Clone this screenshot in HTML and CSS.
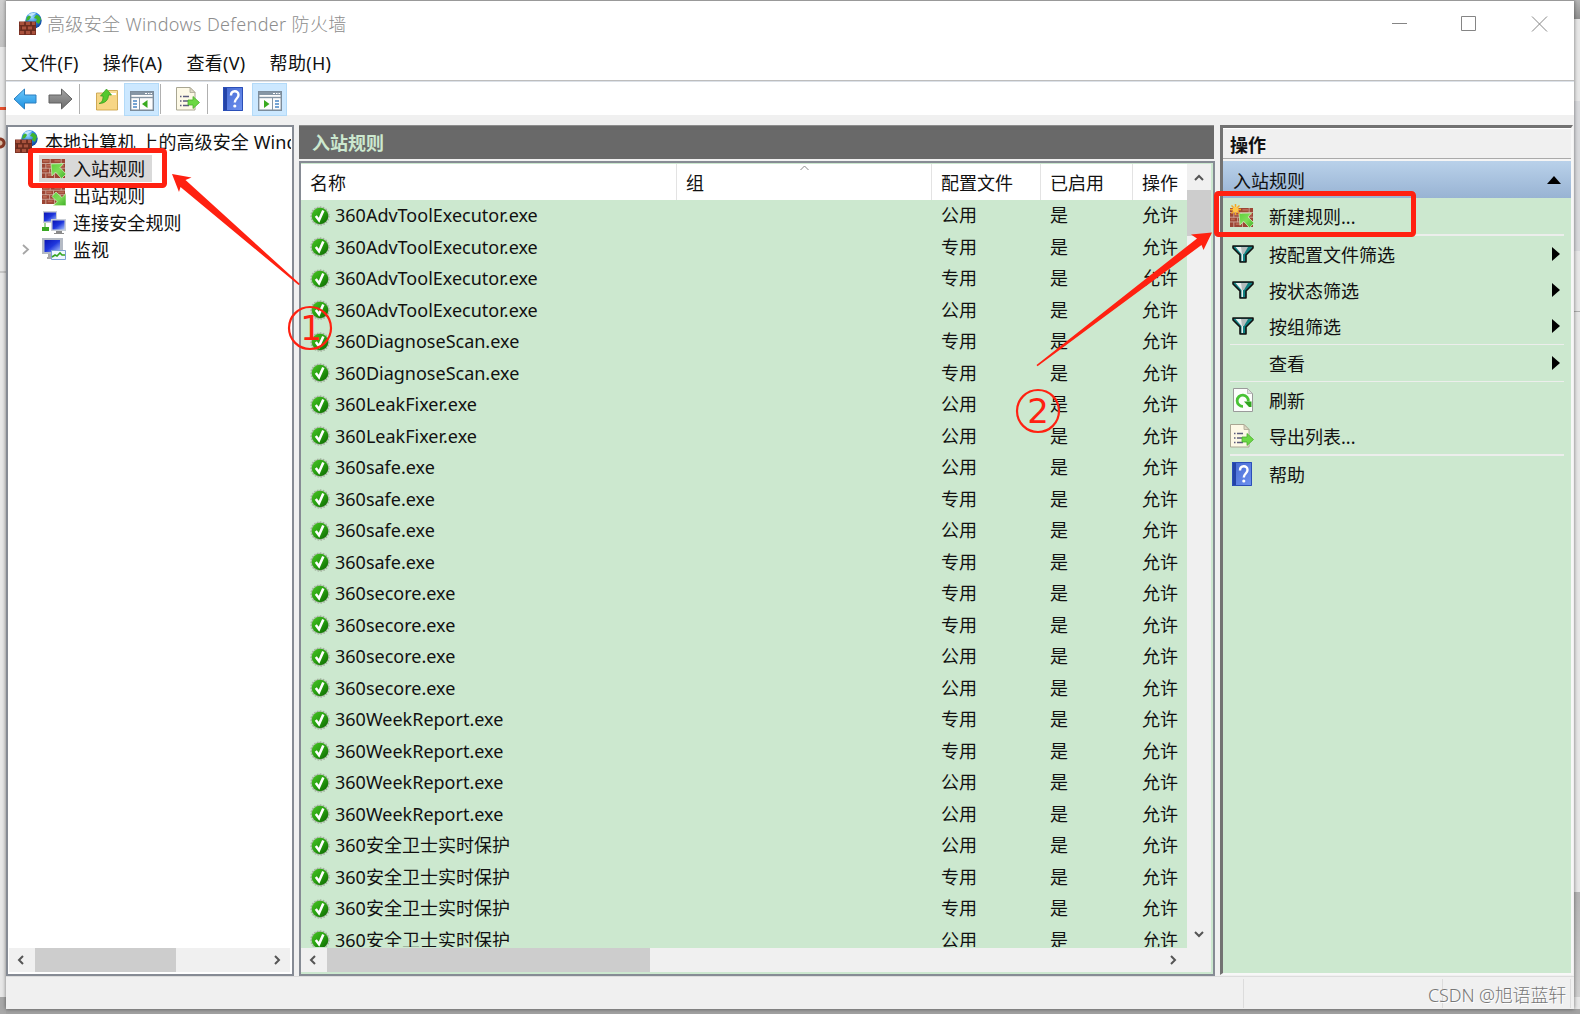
FILE: index.html
```html
<!DOCTYPE html>
<html lang="zh-CN">
<head>
    <meta charset="UTF-8">
    <meta name="viewport" content="width=device-width, initial-scale=1.0">
    <title>高级安全 Windows Defender 防火墙</title>
    <link rel="stylesheet" href="styles.css">
</head>
<body>

    <!-- shared icons -->
    <svg class="defs" width="0" height="0">
        <defs>
            <linearGradient id="gBlue" x1="0" y1="0" x2="0" y2="1"><stop offset="0" stop-color="#6cc8fb"/><stop offset="1" stop-color="#1b8fe0"/></linearGradient>
            <linearGradient id="gGray" x1="0" y1="0" x2="0" y2="1"><stop offset="0" stop-color="#a5a5a5"/><stop offset="1" stop-color="#6b6b6b"/></linearGradient>
            <linearGradient id="gGreen" x1="0" y1="0" x2="1" y2="1"><stop offset="0" stop-color="#5fd03c"/><stop offset=".5" stop-color="#7fdc58"/><stop offset="1" stop-color="#3fae28"/></linearGradient>
            <linearGradient id="gFolder" x1="0" y1="0" x2="0" y2="1"><stop offset="0" stop-color="#fbe29a"/><stop offset="1" stop-color="#e2b654"/></linearGradient>
            <linearGradient id="gScreen" x1="0" y1="0" x2="1" y2="1"><stop offset="0" stop-color="#0a14b4"/><stop offset=".5" stop-color="#1f36dc"/><stop offset="1" stop-color="#a9c4fb"/></linearGradient>
            <linearGradient id="gHelp" x1="0" y1="0" x2="1" y2="1"><stop offset="0" stop-color="#4468d0"/><stop offset="1" stop-color="#6f92f0"/></linearGradient>
            <linearGradient id="gCheck" x1="0" y1="0" x2="1" y2="1"><stop offset="0" stop-color="#4ac326"/><stop offset=".5" stop-color="#27a010"/><stop offset="1" stop-color="#0b6200"/></linearGradient>
            <radialGradient id="gGlobe" cx=".4" cy=".3" r=".75"><stop offset="0" stop-color="#9fdcff"/><stop offset=".5" stop-color="#2b86dd"/><stop offset="1" stop-color="#0d3c94"/></radialGradient>
        </defs>

        <symbol id="bricks" viewBox="0 0 24 20" preserveAspectRatio="none">
            <path fill="#9c4534" d="M0 0h24v20H0z"/>
            <path fill="#bb6a54" d="M1 1h6v2H1zM13 1h6v2h-6zM5 6h5v2H5zM17 6h6v2h-6zM1 11h4v2H1zM12 11h6v2h-6zM6 16h5v2H6z"/>
            <path stroke="#d3b3a6" stroke-width=".9" fill="none" d="M0 4.700h24M0 9.700h24M0 14.700h24M8.500 0v5M20 0v5M4 5v5M12 5v5M8 10v5M19 10v5M4 15v5M13 15v5"/>
        </symbol>
        <symbol id="firewall" viewBox="0 0 23 23">
            <circle cx="14.500" cy="8.500" r="8.200" fill="url(#gGlobe)"/>
            <path fill="#3fb52c" d="M17 3c3 0 4 2 5 4l-2 5-3-2 1-3-3-1zM8 5l3-2 1 2-2 3-3 1z"/>
            <path fill="#d8f1ff" opacity=".8" d="M9 3c2-2 6-2.500 8-1.500l-5 3z"/>
            <path fill="#7e3325" d="M0 9.500h17V23H0z"/>
            <path fill="#a9523d" d="M1 10h4v3H1zM7 10h4v3H7zM13 10h3v3h-3zM3 14.500h4v3H3zM9 14.500h4v3H9zM1 19h4v3H1zM7 19h4v3H7zM13 19h3v3h-3z"/>
            <path stroke="#5f281d" stroke-width=".8" fill="none" d="M0 13.700h17M0 18.200h17M6 9.500v4M12 9.500v4M2.500 14v4M8 14v4M14 14v4M6 18v5M12 18v5"/>
        </symbol>
        <symbol id="inbound" viewBox="0 0 24 20">
            <use href="#bricks" width="23" height="19"/>
            <path fill="url(#gGreen)" stroke="#c9efb6" stroke-width=".8" d="M9 5l12.500-.5-3.500 4 6 6.500-4.500 4.500-6-6.500-3.500 4z"/>
        </symbol>
        <symbol id="outbound" viewBox="0 0 24 20">
            <use href="#bricks" width="23" height="18"/>
            <path fill="url(#gGreen)" stroke="#c9efb6" stroke-width=".8" d="M24 19.500H11.500l3.500-4-5-5 4-4.500 6 5.500 4-4z"/>
        </symbol>
        <symbol id="newrule" viewBox="0 0 24 24">
            <use href="#bricks" x="0" y="4" width="23" height="19"/>
            <path fill="url(#gGreen)" stroke="#c9efb6" stroke-width=".8" d="M9 9.500l12.500-.5-3.500 4 6 6-4.500 4.700-6-6.500-3.500 4z"/>
            <path stroke="#f5a623" stroke-width="1.500" d="M5.500 0v11M0 5.500h11M1.500 1.500l8 8M9.500 1.500l-8 8"/>
            <circle cx="5.500" cy="5.500" r="2.800" fill="#ffc94d"/>
        </symbol>
        <symbol id="connsec" viewBox="0 0 24 24">
            <path fill="#c9ced6" d="M1 0h14v12H1z"/><path fill="url(#gScreen)" d="M2 1.500h12v9H2z"/>
            <path fill="#3aa824" d="M0 16h7v4H0z"/><path stroke="#3aa824" d="M3 12v5"/>
            <path fill="#c9ced6" d="M9 8h15v12H9z"/><path fill="url(#gScreen)" d="M10.500 9.500h12v9h-12z"/>
            <path fill="#8b8b8b" d="M14 20h6v2h2v1H12v-1h2z"/>
        </symbol>
        <symbol id="monitor" viewBox="0 0 24 24">
            <path fill="#b4bac4" d="M0 0h21v16H0z"/><path fill="url(#gScreen)" d="M2.500 2h15.500v12H2.500z"/>
            <path fill="#a9a9a9" d="M6 16h6v3h2v2H5v-2h1z"/>
            <path fill="#eef6ff" stroke="#7da2d4" d="M9.500 12.500h14v9h-14z"/>
            <path fill="none" stroke="#35a51f" stroke-width="1.600" d="M10 19l3-2 2 1 3-3 2 2 3 0"/>
        </symbol>
        <symbol id="export" viewBox="0 0 24 24">
            <path fill="#fdf9e6" stroke="#a9a692" d="M.5.500h13.500l5 5V23H.5z"/>
            <path fill="#ddd9c4" stroke="#a9a692" stroke-width=".8" d="M14 .5v5h5z"/>
            <path stroke="#5c5c7c" stroke-width="1.400" d="M4 9.500h1.500M7 9.500h6M4 14h1.500M7 14h5M4 18.500h1.500M7 18.500h6"/>
            <path fill="#6bd844" stroke="#4aae2b" stroke-width=".8" d="M12 13h5v-3.500l6.500 6-6.500 6V18h-5z"/>
        </symbol>
        <symbol id="help" viewBox="0 0 20 24">
            <path fill="url(#gHelp)" d="M0 0h20v24H0z"/>
            <path fill="#2443a8" d="M0 0h4v24H0z"/>
            <path fill="none" stroke="#2b4fb8" d="M.5.500h19v23H.5z"/>
            <path fill="none" stroke="#fff" stroke-width="2.400" d="M8 8.500c0-5.500 7.500-5.500 7.500-.5 0 3.500-3.700 3.500-3.700 7.500"/>
            <circle cx="11.800" cy="19" r="1.600" fill="#fff"/>
        </symbol>
        <symbol id="refresh" viewBox="0 0 20 24">
            <path fill="#fbfdfb" stroke="#9a9a9a" d="M.5.500h14l5 5v18H.5z"/>
            <path fill="#dedede" stroke="#a8a8a8" stroke-width=".7" d="M14.500.5v5h5z"/>
            <path fill="none" stroke="#48c234" stroke-width="2.800" d="M10 18.300a5.600 5.600 0 1 1 5.300-5"/>
            <path fill="#2fa51e" d="M11 13.500h7.500v5.500h-2.500z"/>
        </symbol>
        <symbol id="filter" viewBox="0 0 22 18">
            <path fill="#0f8080" stroke="#111" stroke-width="1.600" stroke-linejoin="round" d="M1 1h20v2l-7 7v7H8v-7L1 3z"/>
            <path fill="#e9eeee" d="M3.500 2h9l-1.500 7.500v6.500H9.500V9z"/>
            <path fill="#b4bdbd" d="M9 2h7l-4 7h-2z"/>
        </symbol>
        <symbol id="check" viewBox="0 0 20 20">
            <circle cx="10" cy="10" r="9" fill="#b5c4b1" stroke="#a3b3a0" stroke-width="1.400" stroke-dasharray="1.600 1.400"/>
            <circle cx="10" cy="10" r="8.300" fill="url(#gCheck)"/>
            <path fill="none" stroke="#fff" stroke-width="2.600" d="M5.800 10l3.200 4.200L13.300 4.500"/>
        </symbol>
        <symbol id="pane" viewBox="0 0 24 20">
            <path fill="#fdfdfd" stroke="#7c8c9b" stroke-width="1.400" d="M.7.700h22.600v18.600H.7z"/>
            <path fill="#8696a5" d="M1 1h22v3H1z"/>
            <path stroke="#fff" d="M15 2.500h2M18 2.500h1.500M20.500 2.500h1.500"/>
            <path stroke="#8696a5" stroke-width="1.400" d="M1 6.500h22"/>
        </symbol>
    </svg>

    <div class="window">
        <div class="titlebar">
            <svg class="app-icon" width="23" height="23"><use href="#firewall"/></svg>
            <span class="title">高级安全 Windows Defender 防火墙</span>
            <svg class="controls" width="156" height="16" fill="none" stroke="#858585">
                <path d="M0 7.500h15M69.500.5h14v14h-14zM140 .5l15 15M155 .5l-15 15"/>
            </svg>
        </div>

        <div class="menubar">
            <span>文件(F)</span>
            <span>操作(A)</span>
            <span>查看(V)</span>
            <span>帮助(H)</span>
        </div>

        <div class="toolbar">
            <svg class="back" width="24" height="22"><path fill="url(#gBlue)" stroke="#2a7fc0" d="M1 11L11.500 1v6H23v8H11.500v6z"/></svg>
            <svg class="forward" width="25" height="22"><path fill="url(#gGray)" stroke="#606060" d="M24 11L13.500 1v6H1v8h12.500v6z"/></svg>
            <i class="sep"></i>
            <svg class="up" width="22" height="23">
                <path fill="url(#gFolder)" stroke="#c59a3c" stroke-width=".8" d="M.5 5h10l2-2.500h9V22H.5z"/>
                <path fill="#fff" d="M12 5h8v2h-8z"/><path fill="#f7d685" d="M1 8.500h20V21.500H1z"/>
                <path fill="#55c82e" stroke="#349a1b" stroke-width=".7" d="M3 15.500c3-1 4-3 4-7.500H4.500L10.500 1l5 6h-3c0 5-3.500 8.500-9.500 8.500z"/>
            </svg>
            <span class="tool on">
                <svg width="24" height="20"><use href="#pane"/><path stroke="#4a86c5" stroke-width="1.500" d="M3 10h4M3 13h4M3 16h4"/><path stroke="#8696a5" d="M9.500 7v12"/><path fill="#38aa1f" d="M17.500 9v8L12 13z"/></svg>
            </span>
            <i class="sep after"></i>
            <svg class="export" width="24" height="24"><use href="#export"/></svg>
            <i class="sep after-export"></i>
            <svg class="help" width="20" height="24"><use href="#help"/></svg>
            <span class="tool on help-on">
                <svg width="24" height="20"><use href="#pane"/><path stroke="#4a86c5" stroke-width="1.500" d="M17 10h4M17 13h4M17 16h4"/><path stroke="#8696a5" d="M14.500 7v12"/><path fill="#38aa1f" d="M6 9v8l5.500-4z"/></svg>
            </span>
        </div>

        <div class="main">
            <div class="tree">
                <div class="tree-items">
                    <div class="node root"><svg width="23" height="23"><use href="#firewall"/></svg><span>本地计算机 上的高级安全 Wind</span></div>
                    <div class="node selected"><svg width="24" height="20"><use href="#inbound"/></svg><span>入站规则</span></div>
                    <div class="node"><svg width="24" height="20"><use href="#outbound"/></svg><span>出站规则</span></div>
                    <div class="node"><svg width="24" height="24"><use href="#connsec"/></svg><span>连接安全规则</span></div>
                    <div class="node expandable">
                        <svg class="expander" width="8" height="11"><path fill="none" stroke="#a6a6a6" stroke-width="1.800" d="M1 1l5 4.500L1 10"/></svg>
                        <svg width="24" height="24"><use href="#monitor"/></svg><span>监视</span>
                    </div>
                </div>
                <div class="hscroll">
                    <svg class="arrow" width="7" height="10"><path d="M6 1L2 5l4 4"/></svg>
                    <div class="thumb"></div>
                    <svg class="arrow end" width="7" height="10"><path d="M1 1l4 4-4 4"/></svg>
                </div>
            </div>

            <div class="center">
                <div class="center-title">入站规则</div>
                <div class="list">
                    <div class="list-body">
                        <div class="grid">
                            <div class="row head">
                                <span>名称</span><span>组<svg class="sort" width="9" height="6"><path fill="none" stroke="#8a8a8a" d="M.5 5l4-4 4 4"/></svg></span><span>配置文件</span><span>已启用</span><span>操作</span>
                            </div>
                            <div class="rows" id="rows"></div>
                        </div>
                        <div class="vscroll">
                            <svg class="arrow" width="10" height="7"><path d="M1 6l4-4 4 4"/></svg>
                            <div class="thumb"></div>
                            <svg class="arrow end" width="10" height="7"><path d="M1 1l4 4 4-4"/></svg>
                        </div>
                    </div>
                    <div class="hscroll">
                        <svg class="arrow" width="7" height="10"><path d="M6 1L2 5l4 4"/></svg>
                        <div class="thumb"></div>
                        <svg class="arrow end" width="7" height="10"><path d="M1 1l4 4-4 4"/></svg>
                    </div>
                </div>
            </div>

            <div class="actions">
                <div class="actions-title">操作</div>
                <div class="actions-group">入站规则<svg width="14" height="8"><path d="M0 8l7-8 7 8z"/></svg></div>
                <div class="action"><span class="icon"><svg width="24" height="24"><use href="#newrule"/></svg></span>新建规则...</div>
                <hr>
                <div class="action"><span class="icon"><svg width="22" height="18"><use href="#filter"/></svg></span>按配置文件筛选<svg class="more" width="8" height="14"><path d="M0 0l8 7-8 7z"/></svg></div>
                <div class="action"><span class="icon"><svg width="22" height="18"><use href="#filter"/></svg></span>按状态筛选<svg class="more" width="8" height="14"><path d="M0 0l8 7-8 7z"/></svg></div>
                <div class="action"><span class="icon"><svg width="22" height="18"><use href="#filter"/></svg></span>按组筛选<svg class="more" width="8" height="14"><path d="M0 0l8 7-8 7z"/></svg></div>
                <hr>
                <div class="action"><span class="icon"></span>查看<svg class="more" width="8" height="14"><path d="M0 0l8 7-8 7z"/></svg></div>
                <hr class="thin">
                <div class="action"><span class="icon"><svg class="page" width="20" height="24"><use href="#refresh"/></svg></span>刷新</div>
                <div class="action"><span class="icon"><svg width="24" height="24"><use href="#export"/></svg></span>导出列表...</div>
                <hr>
                <div class="action"><span class="icon"><svg width="20" height="24"><use href="#help"/></svg></span>帮助</div>
            </div>
        </div>

        <div class="statusbar">
            <span></span><span></span><span></span>
        </div>
    </div>

    <!-- red marks drawn over the window -->
    <svg class="marks" width="1580" height="1014">
        <rect x="30.500" y="150.500" width="134" height="35" rx="2"/>
        <rect x="1216.500" y="193.500" width="197" height="41" rx="2"/>
        <path d="M172 174l19.500 3.500-6 2.500L300 284l-1.500 1L180.500 187l-1.500 5z"/>
        <path d="M1212 232.500l-21 2 6 4L1036.500 365l1 1.300L1201.500 245l2 5z"/>
        <circle cx="310" cy="328" r="21"/>
        <circle cx="1038" cy="411" r="21"/>
        <text x="311" y="340">1</text>
        <text x="1038" y="423">2</text>
    </svg>

    <div class="watermark">CSDN @旭语蓝轩</div>

    <script>
        // name + profile of each inbound rule
        const rules = [
            ['360AdvToolExecutor.exe', '公用'],
            ['360AdvToolExecutor.exe', '专用'],
            ['360AdvToolExecutor.exe', '专用'],
            ['360AdvToolExecutor.exe', '公用'],
            ['360DiagnoseScan.exe', '专用'],
            ['360DiagnoseScan.exe', '专用'],
            ['360LeakFixer.exe', '公用'],
            ['360LeakFixer.exe', '公用'],
            ['360safe.exe', '公用'],
            ['360safe.exe', '专用'],
            ['360safe.exe', '公用'],
            ['360safe.exe', '专用'],
            ['360secore.exe', '专用'],
            ['360secore.exe', '专用'],
            ['360secore.exe', '公用'],
            ['360secore.exe', '公用'],
            ['360WeekReport.exe', '专用'],
            ['360WeekReport.exe', '专用'],
            ['360WeekReport.exe', '公用'],
            ['360WeekReport.exe', '公用'],
            ['360安全卫士实时保护', '公用'],
            ['360安全卫士实时保护', '专用'],
            ['360安全卫士实时保护', '专用'],
            ['360安全卫士实时保护', '公用']
        ];

        document.getElementById('rows').innerHTML = rules.map(([name, profile]) => `
            <div class="row">
                <span class="name"><svg width="20" height="20"><use href="#check"/></svg>${name}</span>
                <span></span>
                <span>${profile}</span>
                <span>是</span>
                <span>允许</span>
            </div>`).join('');
    </script>
</body>
</html>
```
FILE: styles.css
```css
* {
    box-sizing: border-box;
}

body {
    margin: 0;
    width: 1580px;
    height: 1014px;
    overflow: hidden;
    padding: 0 6px 5px;
    font-family: "Noto Sans", "Noto Sans CJK SC", sans-serif;
    font-size: 18px;
    color: #111;
    /* what is left of the desktop behind the window */
    background:
        linear-gradient(#d0d0d0, #c4c4c4) 0 0 / 6px 47px no-repeat,
        linear-gradient(#e8512f, #e8512f) 0 107px / 6px 3px no-repeat,
        radial-gradient(circle at 0 143px, #d8b9a0 2px, #8a3a26 3px, #8a3a26 5px, transparent 6px) 0 0 / 6px 160px no-repeat,
        linear-gradient(#c8c8c8, #c8c8c8) 0 271px / 6px 2px no-repeat,
        linear-gradient(#a8a8a8, #a8a8a8) 0 997px / 6px 17px no-repeat,
        linear-gradient(#b8b8b8, #909090) 1574px 0 / 6px 19px no-repeat,
        linear-gradient(#d9dadd, #d9dadd) 1574px 101px / 6px 150px no-repeat,
        linear-gradient(#b0b0b0, #b0b0b0) 1574px 311px / 6px 1px no-repeat,
        linear-gradient(#b5b5b5, #d0d0d0) 1574px 892px / 6px 105px no-repeat,
        linear-gradient(#a2a2a2, #a2a2a2) 0 1009px / 1580px 5px no-repeat,
        #e8e8e8;
}

.defs {
    position: absolute;
}

svg {
    flex: none;
}

.window {
    height: 1009px;
    display: flex;
    flex-direction: column;
    background: #f0f0f0;
    border-top: 1px solid #999;
    box-shadow: 0 0 4px rgba(0, 0, 0, 0.5);
}

.titlebar {
    height: 46px;
    display: flex;
    align-items: center;
    padding: 0 26px 1px 13px;
    background: #fff;
    color: #8d8d8d;
}

.title {
    margin-left: 5px;
    line-height: 24px;
    font-weight: 300;
    letter-spacing: 0.36px;
}

.controls {
    margin-left: auto;
}

.menubar {
    height: 34px;
    display: flex;
    gap: 24px;
    padding-left: 15px;
    line-height: 33px;
    letter-spacing: 0.3px;
    background: #fff;
    border-bottom: 1px solid #bdbdbd;
}

.toolbar {
    height: 34px;
    display: flex;
    align-items: center;
    padding: 1px 0 0 7px;
    background: #fff;
    border-top: 1px solid #dce1e8;
}

.forward {
    margin-left: 11px;
}

.sep {
    width: 1px;
    height: 30px;
    background: #b0b0b0;
    margin-left: 6px;
}

.up {
    margin: 0 6px 0 16px;
}

.tool {
    width: 35px;
    height: 33px;
    display: flex;
    align-items: center;
    justify-content: center;
    background: #cce8ff;
    border: 1px solid #b3daf8;
    padding-top: 4px;
}

.after {
    margin: 0 15px 0 1px;
}

.after-export {
    margin: 0 15px 0 7px;
}

.help-on {
    margin-left: 9px;
}

.main {
    flex: 1;
    display: flex;
    padding-top: 10px;
}

.tree {
    width: 288px;
    height: 851px;
    border: 2px solid #868b94;
    background: #fff;
    display: flex;
    flex-direction: column;
    padding: 1px;
}

.tree-items {
    flex: 1;
    overflow: hidden;
    width: 282px;
}

.node {
    height: 27px;
    display: flex;
    align-items: center;
    padding-left: 33px;
    white-space: nowrap;
    line-height: 26px;
}

.node span {
    margin-left: 7px;
    letter-spacing: 0.1px;
}

.root {
    padding-left: 6px;
}

.selected {
    width: 113px;
    margin-left: 30px;
    padding-left: 3px;
    background: #d9d9d9;
}

.expandable {
    padding-left: 13px;
}

.expander {
    margin-right: 12px;
}

.hscroll {
    height: 24px;
    display: flex;
    align-items: center;
    background: #f0f0f0;
    margin: 0 1px 1px 0;
}

.hscroll .thumb {
    width: 141px;
    height: 24px;
    margin-left: 11px;
    background: #cdcdcd;
}

.tree .arrow:first-child {
    margin-left: 8px;
}

.arrow {
    fill: none;
    stroke: #555;
    stroke-width: 2;
}

.tree .expander {
    margin-left: 0;
}

.tree .end {
    margin-left: auto;
    margin-right: 9px;
}

.center {
    width: 916px;
    margin-left: 5px;
}

.center-title {
    width: 915px;
    height: 34px;
    padding-left: 13px;
    line-height: 35px;
    background: #696969;
    border-top: 1px solid #8c8c8c;
    color: #cce8cf;
    font-weight: 700;
}

.list {
    height: 815px;
    margin-top: 2px;
    display: flex;
    flex-direction: column;
    background: #cce8cf;
    border: 2px solid #868b94;
    padding: 1px 2px 2px 0;
}

.list-body {
    flex: 1;
    min-height: 0;
    display: flex;
    overflow: hidden;
}

.grid {
    width: 886px;
    display: flex;
    flex-direction: column;
    overflow: hidden;
}

.rows {
    height: 747px;
    overflow: hidden;
}

.row {
    height: 31.5px;
    display: grid;
    grid-template-columns: 376px 255px 109px 92px 54px;
    align-items: center;
    line-height: 31px;
    white-space: nowrap;
}

.row > span {
    padding-left: 9px;
}

.head {
    height: 36px;
    flex: none;
    background: #fff;
    line-height: 38px;
}

.head > span {
    position: relative;
    height: 36px;
    border-right: 1px solid #e3e3e3;
}

.head > span:last-child {
    border: 0;
}

.row > .name {
    display: flex;
    align-items: center;
    gap: 5px;
    padding-left: 9px;
}

.sort {
    position: absolute;
    left: 123px;
    top: 1px;
}

.vscroll {
    width: 24px;
    display: flex;
    flex-direction: column;
    align-items: center;
    background: #f0f0f0;
}

.vscroll .arrow {
    margin-top: 10px;
}

.vscroll .thumb {
    width: 24px;
    height: 46px;
    margin-top: 9px;
    background: #cdcdcd;
}

.vscroll .end {
    margin-top: auto;
    margin-bottom: 10px;
}

.list .hscroll {
    margin: 0;
}

.list .hscroll .thumb {
    width: 323px;
    margin-left: 11px;
}

.hscroll .arrow:first-child {
    margin-left: 8px;
}

.list .hscroll .end {
    margin-left: auto;
    margin-right: 34px;
}

.actions {
    width: 353px;
    height: 850px;
    margin-left: 5px;
    background: #cce8cf;
    border: solid #727272;
    border-width: 3px 2px 2px 3px;
    border-right-color: #f7f7f7;
    border-bottom-color: #f7f7f7;
}

.actions-title {
    height: 31px;
    padding-left: 7px;
    line-height: 33px;
    font-weight: 700;
    background: #f0f0f0;
    border-top: 1px solid #fff;
    border-bottom: 1px solid #aaa;
}

.actions-group {
    height: 39px;
    display: flex;
    align-items: center;
    justify-content: space-between;
    padding: 1px 10px 0 10px;
    border-top: 2px solid #f5f5f5;
    background: linear-gradient(#b9d1ea, #98b3d3);
}

.action {
    height: 36px;
    display: flex;
    align-items: center;
    padding: 0 11px 0 7px;
}

.icon {
    width: 39px;
    display: flex;
    align-items: center;
}

.icon svg[width="22"],
.icon svg[width="20"] {
    margin-left: 2px;
}

.icon svg.page {
    margin-left: 3px;
}

.more {
    margin-left: auto;
}

hr {
    height: 1.5px;
    margin: 0 7px;
    border: 0;
    background: #eceeec;
}

.thin {
    height: 1px;
}

.statusbar {
    height: 33px;
    display: flex;
    justify-content: flex-end;
    padding: 2px 3px 1px 0;
    border-top: 1px solid #dcdcdc;
}

.statusbar span {
    width: 199px;
    border-right: 1px solid #dcdcdc;
}

.statusbar span:last-child {
    width: 128px;
}

.marks {
    position: absolute;
    left: 0;
    top: 0;
    fill: #ff2111;
}

.marks rect {
    fill: none;
    stroke: #ff2111;
    stroke-width: 5;
}

.marks circle {
    fill: none;
    stroke: #ff2111;
    stroke-width: 2.2;
}

.marks text {
    font-family: "DejaVu Sans", sans-serif;
    font-size: 34px;
    text-anchor: middle;
}

.watermark {
    position: absolute;
    left: 1428px;
    top: 983px;
    line-height: 24px;
    font-weight: 300;
    letter-spacing: -0.15px;
    color: #777;
    text-shadow: 1px 1px 0 #fff;
    white-space: nowrap;
}
```
